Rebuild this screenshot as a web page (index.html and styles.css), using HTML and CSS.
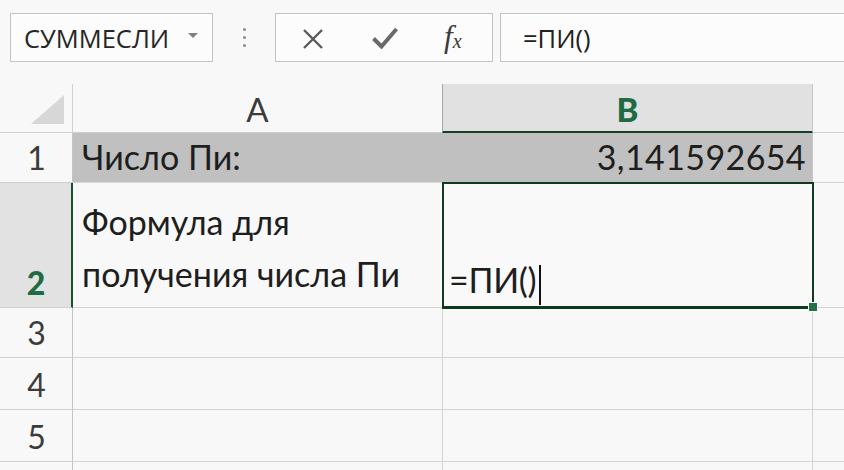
FILE: index.html
```html
<!DOCTYPE html>
<html lang="ru">
<head>
<meta charset="utf-8">
<title>ПИ</title>
<link rel="stylesheet" href="styles.css">
</head>
<body>
<div class="toolbar">
  <div class="namebox">
    <span class="name">СУММЕСЛИ</span>
    <span class="caret"></span>
  </div>
  <div class="dots"><span></span><span></span><span></span></div>
  <div class="buttons">
    <svg class="ico-x" width="22" height="20" viewBox="0 0 22 20"><path d="M2 1 L20 19 M20 1 L2 19" stroke="#5a5a5a" stroke-width="2.4" fill="none"/></svg>
    <svg class="ico-ok" width="26" height="22" viewBox="0 0 26 22"><path d="M1.5 11.5 L9.5 19.5 L24.5 2" stroke="#6a6a6a" stroke-width="4" fill="none" stroke-linejoin="miter"/></svg>
    <span class="fx"><i>f</i><i class="sx">x</i></span>
  </div>
  <div class="formula">=ПИ()</div>
</div>
<div class="sheet">
  <div class="corner"><svg width="34" height="30" viewBox="0 0 34 30"><path d="M33 0 L33 29 L0 29 Z" fill="#d7d7d7"/></svg></div>
  <div class="colhead">A</div>
  <div class="colhead sel">B</div>
  <div class="colhead rest"></div>

  <div class="rowhead">1</div>
  <div class="cell gray text">Число Пи:</div>
  <div class="cell gray num">3,141592654</div>
  <div class="cell rest"></div>

  <div class="rowhead sel tall">2</div>
  <div class="cell tall text wrap">Формула для<br>получения числа Пи</div>
  <div class="cell tall active"><span class="edit">=ПИ()</span><span class="cursor"></span><span class="handle"></span></div>
  <div class="cell rest tall"></div>

  <div class="rowhead">3</div>
  <div class="cell"></div>
  <div class="cell"></div>
  <div class="cell rest"></div>

  <div class="rowhead r4">4</div>
  <div class="cell r4"></div>
  <div class="cell r4"></div>
  <div class="cell rest r4"></div>

  <div class="rowhead r4">5</div>
  <div class="cell r4"></div>
  <div class="cell r4"></div>
  <div class="cell rest r4"></div>

  <div class="rowhead last"></div>
  <div class="cell last"></div>
  <div class="cell last"></div>
  <div class="cell rest last"></div>
</div>
</body>
</html>
```
FILE: styles.css
```css
* { box-sizing: border-box; }
html, body {
  margin: 0;
  padding: 0;
  background: #f8f8f8;
  width: 844px;
  height: 470px;
  overflow: hidden;
}
body {
  font-family: "Open Sans", "Noto Sans", sans-serif;
  color: #222;
}
.toolbar {
  display: flex;
  align-items: flex-start;
  padding: 13px 0 0 10px;
  height: 84px;
}
.namebox {
  width: 203px;
  height: 49px;
  border: 1px solid #c4c4c4;
  background: #fcfcfc;
  display: flex;
  align-items: center;
  padding-left: 13px;
}
.name {
  font-family: "Open Sans", sans-serif;
  font-size: 25.5px;
  letter-spacing: 0;
  color: #262626;
  width: 164px;
}
.caret {
  width: 0;
  height: 0;
  border-left: 5px solid transparent;
  border-right: 5px solid transparent;
  border-top: 5px solid #808080;
  margin-top: -5px;
}
.dots {
  width: 62px;
  height: 49px;
  display: flex;
  flex-direction: column;
  align-items: center;
  justify-content: center;
  gap: 5px;
  padding-left: 1px;
}
.dots span {
  width: 3px;
  height: 3px;
  background: #8a8a8a;
  border-radius: 50%;
}
.buttons {
  width: 218px;
  height: 49px;
  border: 1px solid #c4c4c4;
  background: #fcfcfc;
  display: flex;
  align-items: center;
  padding-left: 26px;
}
.ico-x { margin-top: 2px; }
.ico-ok { margin-left: 48px; margin-top: 1px; }
.fx {
  margin-left: 46px;
  font-family: "Liberation Serif", serif;
  font-size: 31px;
  color: #3a3a3a;
  line-height: 1;
  margin-top: -3px;
}
.fx .sx {
  font-size: 20px;
  position: relative;
  top: 1px;
  margin-left: 0;
}
.formula {
  flex: 1;
  margin-left: 7px;
  margin-right: -4px;
  height: 49px;
  border: 1px solid #c4c4c4;
  background: #fcfcfc;
  font-family: "Open Sans", sans-serif;
  font-size: 25.5px;
  color: #222;
  display: flex;
  align-items: center;
  padding-left: 22px;
}

.sheet {
  display: grid;
  grid-template-columns: 73px 370px 370px 1fr;
  grid-template-rows: 49px 50px 125px 50px 52px 52px 1fr;
  height: 386px;
  font-family: "Lato", "Open Sans", sans-serif;
}
.corner {
  border-right: 1px solid #d0d0d0;
  border-bottom: 1px solid #d0d0d0;
  display: flex;
  align-items: flex-end;
  justify-content: flex-end;
  padding: 0 7px 7px 0;
}
.colhead {
  border-right: 1px solid #d0d0d0;
  border-bottom: 1px solid #d0d0d0;
  display: flex;
  align-items: flex-end;
  justify-content: center;
  font-size: 33px;
  color: #3c3c3c;
  padding-bottom: 6px;
  line-height: 1;
}
.colhead.sel {
  background: #e1e1e1;
  border-left: 1px solid #a8a8a8;
  margin-left: -1px;
  border-right-color: #c8c8c8;
  border-bottom: 3px solid #163f27;
  color: #1f6b43;
  font-weight: 900;
  padding-bottom: 5px;
  margin-bottom: -1px;
}
.colhead.rest { border-right: none; }
.rowhead {
  border-right: 1px solid #c4c4c4;
  border-bottom: 1px solid #d0d0d0;
  display: flex;
  align-items: flex-end;
  justify-content: center;
  font-size: 32px;
  color: #3c3c3c;
  padding-bottom: 8px;
  padding-left: 1px;
  line-height: 1;
}
.rowhead.sel {
  background: #e2e2e2;
  border-right: 2px solid #1b4f31;
  color: #1f6b43;
  font-weight: 900;
  padding-bottom: 8px;
}
.cell {
  border-right: 1px solid #d4d4d4;
  border-bottom: 1px solid #d4d4d4;
  font-size: 34px;
  color: #1e1e1e;
  line-height: 1;
}
.cell.rest { border-right: none; }
.cell.gray {
  background: #c0c0c0;
  border-right-color: #c0c0c0;
  border-bottom-color: #d8d8d8;
  display: flex;
  align-items: flex-end;
  padding-bottom: 8px;
}
.cell.num { justify-content: flex-end; padding-right: 6px; border-right-color: #c8c8c8; letter-spacing: 0.4px; }
.cell.text { padding-left: 9px; }
.cell.wrap {
  line-height: 52px;
  padding-top: 13px;
}
.cell.active {
  position: relative;
  border: 2px solid #0f3a1f;
  border-bottom-width: 3px;
  margin: -1px 0 -1px -1px;
  width: 372px;
  display: flex;
  align-items: flex-end;
  padding-left: 5px;
  padding-bottom: 9px;
  background: #f9f9f9;
  z-index: 1;
}
.edit { letter-spacing: -0.3px; }
.cursor {
  display: inline-block;
  width: 1.5px;
  height: 40px;
  background: #111;
  margin-left: 3px;
  margin-bottom: -8px;
}
.handle {
  position: absolute;
  right: -6px;
  bottom: -6px;
  width: 10px;
  height: 10px;
  background: #217346;
  border: 1px solid #f8f8f8;
}
.last { border-bottom: none; }
```
